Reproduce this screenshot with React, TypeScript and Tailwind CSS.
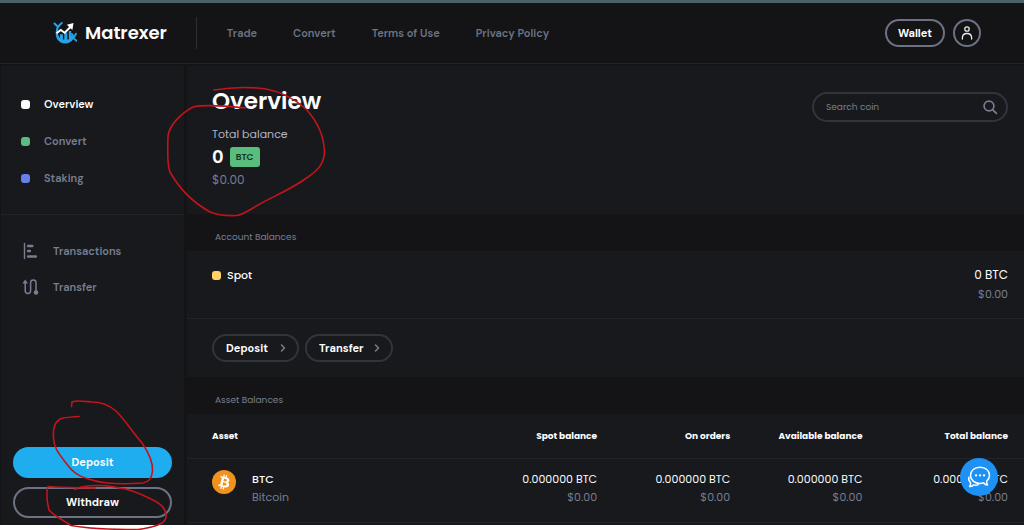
import { ChevronRight } from "lucide-react";

const links = ["Trade", "Convert", "Terms of Use", "Privacy Policy"];

const sections = [
  { label: "Overview", dot: "bg-[#fcfcfd]", text: "text-[#fcfcfd]" },
  { label: "Convert", dot: "bg-[#58bd7d]", text: "text-[#777e90]" },
  { label: "Staking", dot: "bg-[#6580eb]", text: "text-[#777e90]" },
];

const columns = ["Spot balance", "On orders", "Available balance", "Total balance"];

function Logo() {
  return (
    <svg className="h-6 w-6" viewBox="0 0 24 24" fill="none" aria-hidden="true">
      <path d="M2.800 11c-.8 6 3 11.300 9 11.500 4.200.1 7.300-2 8.800-5.300l-.4-4.200-2 1.800V10h-2.400v8.500h-1.500v-7h-3v7H9.900v-5.200H7v3.700C5.400 15.500 4.800 13.200 5 10.800z" fill="#27a3e6" />
      <path d="M3.800 11.500C3.500 8.500 4.600 5.600 7.300 3.200M4.500 5.500 1.500 2.500M5.200 5.200 8.800 2M19 13l1.700 4.500 2.800 2.200M20.500 17l2.500-4.200" stroke="#27a3e6" strokeWidth="1.900" strokeLinecap="round" />
      <path d="M3.500 12.300 7.800 9l3.800 2.700 6.400-6.200" stroke="#fff" strokeWidth="2" />
      <path d="M13.800 3.800 20.500 2 19.400 9z" fill="#fff" />
    </svg>
  );
}

function PersonIcon() {
  return (
    <svg className="h-4 w-4" viewBox="0 0 16 16" fill="none" stroke="#e6e8ec" strokeWidth="1.300" strokeLinecap="round" aria-hidden="true">
      <circle cx="8" cy="4" r="2.200" />
      <path d="M3.400 14v-1.200c0-2.600 2-4.300 4.600-4.300s4.600 1.700 4.600 4.300V14" />
    </svg>
  );
}

function SearchIcon() {
  return (
    <svg className="h-4 w-4" viewBox="0 0 16 16" fill="none" stroke="#777e90" strokeWidth="1.700" strokeLinecap="round" aria-hidden="true">
      <circle cx="7" cy="7" r="4.900" />
      <path d="m10.800 10.800 3.600 3.600" />
    </svg>
  );
}

function TransactionsIcon() {
  return (
    <svg className="h-[18px] w-[18px]" viewBox="0 0 18 18" fill="none" stroke="#777e90" strokeLinecap="round" aria-hidden="true">
      <path d="M3.500 1.500v15" strokeWidth="1.400" />
      <path d="M7.200 4h4M7.200 9h1.600M7.200 14.500h7.600" strokeWidth="2.700" />
    </svg>
  );
}

function TransferIcon() {
  return (
    <svg className="h-[18px] w-[18px]" viewBox="0 0 18 18" fill="none" aria-hidden="true">
      <path d="M4.200 4v8.700a2.700 2.700 0 0 0 5.400 0V4.700a2.700 2.700 0 0 1 5.400 0V13" stroke="#777e90" strokeWidth="1.500" />
      <path d="M4.200 1.500 7 5.500H1.400z" fill="#777e90" />
      <circle cx="15" cy="14.500" r="2.300" fill="#777e90" />
    </svg>
  );
}

function BitcoinIcon() {
  return (
    <svg className="h-6 w-6 shrink-0" viewBox="0 0 32 32" aria-hidden="true">
      <circle cx="16" cy="16" r="16" fill="#f0921e" />
      <path
        fill="#fff"
        d="M23.189 14.020c.314-2.096-1.283-3.223-3.465-3.975l.708-2.840-1.728-.43-.69 2.765c-.454-.114-.92-.22-1.385-.326l.695-2.783L15.596 6l-.708 2.839c-.376-.086-.746-.17-1.104-.26l.002-.009-2.384-.595-.46 1.846s1.283.294 1.256.312c.7.175.826.638.805 1.006l-.806 3.235c.048.012.11.030.18.057l-.183-.045-1.130 4.532c-.086.212-.303.531-.793.410.018.025-1.256-.313-1.256-.313l-.858 1.978 2.250.561c.418.105.828.215 1.231.318l-.715 2.872 1.727.43.708-2.840c.472.127.930.245 1.378.357l-.706 2.828 1.728.43.715-2.866c2.948.558 5.164.333 6.097-2.333.752-2.146-.037-3.385-1.588-4.192 1.130-.26 1.980-1.003 2.207-2.538zm-3.950 5.538c-.533 2.147-4.148.986-5.320.695l.950-3.805c1.172.293 4.929.872 4.370 3.110zm.535-5.569c-.487 1.953-3.495.960-4.470.717l.860-3.450c.975.243 4.118.696 3.610 2.733z"
      />
    </svg>
  );
}

function ChatIcon() {
  return (
    <svg className="h-6 w-6" viewBox="0 0 24 24" fill="none" stroke="#fff" strokeWidth="1.500" strokeLinejoin="round" strokeLinecap="round" aria-hidden="true">
      <path d="M13 2.200c-5.500 0-9.500 3.500-9.500 8.100s4 8.100 9.500 8.100c1.300 0 2.500-.2 3.600-.6 1 1.400 2.300 2.200 3.900 2.200-.8-1.300-1-2.600-.8-3.900 1.800-1.600 2.800-3.400 2.800-5.800 0-4.600-4-8.100-9.500-8.100z" />
      <path d="M1.900 12.300c-.5 2 .2 4.100 1.700 5.400.2 1.300-.2 2.700-1 3.800 1.600.1 2.900-.4 3.900-1.600 1.400.5 3.400.5 4.800-.2" />
      <path d="M9 10.400h.1M13 10.400h.1M17 10.400h.1" strokeWidth="2.300" />
    </svg>
  );
}

function Annotations() {
  return (
    <svg className="pointer-events-none absolute left-0 -top-[3px] z-20" width="1024" height="530" fill="none" stroke="#c4141b" strokeWidth="1.600" strokeLinecap="round" strokeLinejoin="round" aria-hidden="true">
      <path d="M214 90C232 87 252 87 266 89C282 92 295 99 306 109C317 121 324 136 324.500 152C324 164 318 170 308 177C292 189 274 196 258 205C250 210 243 214.500 237 215.500C226 216 217 215 210 212C194 203 180 190 170 172C167 166 167.500 150 168 136C169 126 180 114 193 107C205 104 226 106 245 108" />
      <path d="M71.500 406.500L72 402C76 400 82 401 92 402C102 402 109 405 116 411C126 421 133 433 142 443C149 453 153 463 152.500 471C152 477 150 482 143 483C128 484 104 484 92 480C80 477 73 473 66 463C60 455 54 449 53.500 438C53 429 54 423 60 419C65 417 72 417 79 416.500" />
      <path d="M95 488C80 487.500 63 488 48 486.500C46 493 47 502 49 510C54 516 63 520 71 525.500C90 529 118 529.500 138 529.500C152 528 164 524 165.500 519C168 511 162 504 151 499C139 493 130 489 119 488C108 485 92 485 84 486.500C80 487 77 488 75 489.500" />
    </svg>
  );
}

export default function App() {
  return (
    <div className="relative flex min-h-screen flex-col border-t-[3px] border-[#4b626a] bg-[#141416] font-['Poppins','Inter',sans-serif] text-[#fcfcfd]">
      <header className="flex h-[61px] items-center border-b border-[#212329] pl-[53px] pr-[43px] font-['DM_Sans','Inter',sans-serif]">
        <a href="#home" className="flex items-center gap-2 font-['Poppins','Inter',sans-serif] text-lg font-semibold">
          <Logo />
          Matrexer
        </a>
        <nav className="ml-[29px] flex h-8 items-center gap-9 border-l border-[#2c2f38] pl-[30px] text-[11px] font-semibold text-[#6d7385]">
          {links.map((link) => (
            <a key={link} href="#nav">{link}</a>
          ))}
        </nav>
        <div className="ml-auto flex items-center gap-2">
          <button className="h-7 w-[60px] rounded-full border-2 border-[#6c7283] text-[11px] font-bold leading-4">Wallet</button>
          <button aria-label="Account" className="flex h-7 w-7 items-center justify-center rounded-full border-2 border-[#6c7283]">
            <PersonIcon />
          </button>
        </div>
      </header>

      <div className="mt-[2px] flex flex-1 gap-[3px] pl-px">
        <aside className="flex w-[183px] shrink-0 flex-col bg-[#18191d] font-['DM_Sans','Inter',sans-serif] text-[11px] font-semibold">
          <nav className="flex flex-col gap-[21px] border-b border-[#212329] pb-7 pl-5 pt-[30px]">
            {sections.map((item) => (
              <a key={item.label} href="#section" className={`flex items-center gap-[14px] leading-4 ${item.text}`}>
                <span className={`h-[9px] w-[9px] rounded-[3px] ${item.dot}`} />
                {item.label}
              </a>
            ))}
          </nav>
          <nav className="flex flex-col gap-[18px] pl-5 pt-[27px] leading-[18px] text-[#777e90]">
            <a href="#transactions" className="flex items-center gap-[14px]">
              <TransactionsIcon />
              Transactions
            </a>
            <a href="#transfer" className="flex items-center gap-[14px]">
              <TransferIcon />
              Transfer
            </a>
          </nav>
          <div className="mt-auto flex flex-col gap-[9px] px-3 pb-[7px] font-bold">
            <button className="h-[31px] rounded-full bg-[#1eaef0]">Deposit</button>
            <button className="h-[31px] rounded-full border-2 border-[#6c7283]">Withdraw</button>
          </div>
        </aside>

        <main className="flex min-w-0 flex-1 flex-col">
          <section className="flex h-[148px] items-start justify-between bg-[#18191d] pl-[25px] pr-4 pt-[19px]">
            <div>
              <h1 className="text-[23px] font-semibold leading-8">Overview</h1>
              <p className="mt-2 text-[11px] leading-[18px] text-[#b1b5c3]">Total balance</p>
              <div className="mt-[2px] flex items-center gap-[6px] text-lg font-semibold leading-6">
                0
                <span className="rounded-[3px] bg-[#58bd7d] px-[6px] text-[9px] font-semibold leading-5 text-[#1b3325]">BTC</span>
              </div>
              <p className="text-xs leading-[22px] text-[#777e90]">$0.00</p>
            </div>
            <div className="mt-[7px] flex h-[30px] w-[196px] items-center rounded-full border-2 border-[#31343d] pl-3 pr-2">
              <input type="text" aria-label="Search coin" placeholder="Search coin" className="h-5 min-w-0 flex-1 bg-transparent text-[9px] leading-5 outline-none placeholder:text-[#777e90]" />
              <SearchIcon />
            </div>
          </section>

          <h2 className="h-[37px] pl-7 pt-[15px] text-[9px] leading-4 text-[#777e90]">Account Balances</h2>
          <section className="bg-[#18191d]">
            <div className="flex h-[68px] justify-between border-b border-[#212329] pl-[25px] pr-4 pt-[14px]">
              <h3 className="flex h-5 items-center gap-[6px] text-[11px] font-medium">
                <span className="h-[9px] w-[9px] rounded-[3px] bg-[#ffd166]" />
                Spot
              </h3>
              <div className="text-right">
                <p className="text-xs leading-5">0 BTC</p>
                <p className="text-[11px] leading-[18px] text-[#777e90]">$0.00</p>
              </div>
            </div>
            <div className="flex gap-[6px] py-[15px] pl-[25px] font-['DM_Sans','Inter',sans-serif] text-[11px] font-bold">
              <button className="flex h-7 w-[87px] items-center justify-between rounded-full border-2 border-[#31343d] pl-3 pr-2">
                Deposit
                <ChevronRight className="h-3 w-3 text-[#777e90]" strokeWidth={3} />
              </button>
              <button className="flex h-7 w-[88px] items-center justify-between rounded-full border-2 border-[#31343d] pl-3 pr-2">
                Transfer
                <ChevronRight className="h-3 w-3 text-[#777e90]" strokeWidth={3} />
              </button>
            </div>
          </section>

          <h2 className="h-[37px] pl-7 pt-[15px] text-[9px] leading-4 text-[#777e90]">Asset Balances</h2>
          <section className="flex-1 bg-[#18191d]">
            <table className="w-full table-fixed text-right">
              <thead>
                <tr className="h-[44px] border-b border-[#212329] text-[9px]">
                  <th className="w-[31%] pl-[25px] pt-[2px] text-left font-bold">Asset</th>
                  {columns.map((column) => (
                    <th key={column} className="pt-[2px] font-bold last:w-[19.3%] last:pr-4 nth-2:w-[18%] nth-3:w-[15.9%] nth-4:w-[15.8%]">{column}</th>
                  ))}
                </tr>
              </thead>
              <tbody>
                <tr className="h-[64px] border-b border-[#212329] align-top text-[11px] leading-[18px]">
                  <td className="pl-[25px] pt-[11px] text-left">
                    <div className="flex items-start gap-4">
                      <BitcoinIcon />
                      <div>
                        <p className="font-medium">BTC</p>
                        <p className="text-[#777e90]">Bitcoin</p>
                      </div>
                    </div>
                  </td>
                  {columns.map((column) => (
                    <td key={column} className="pt-[11px] last:pr-4">
                      <p>0.000000 BTC</p>
                      <p className="text-[#777e90]">$0.00</p>
                    </td>
                  ))}
                </tr>
              </tbody>
            </table>
          </section>
        </main>
      </div>
      <div className="h-[5px] bg-white" />

      <button aria-label="Open chat" className="absolute bottom-[34px] right-[26px] z-10 flex h-[38px] w-[38px] items-center justify-center rounded-full bg-[#1d91f5]">
        <ChatIcon />
      </button>
      <Annotations />
    </div>
  );
}
